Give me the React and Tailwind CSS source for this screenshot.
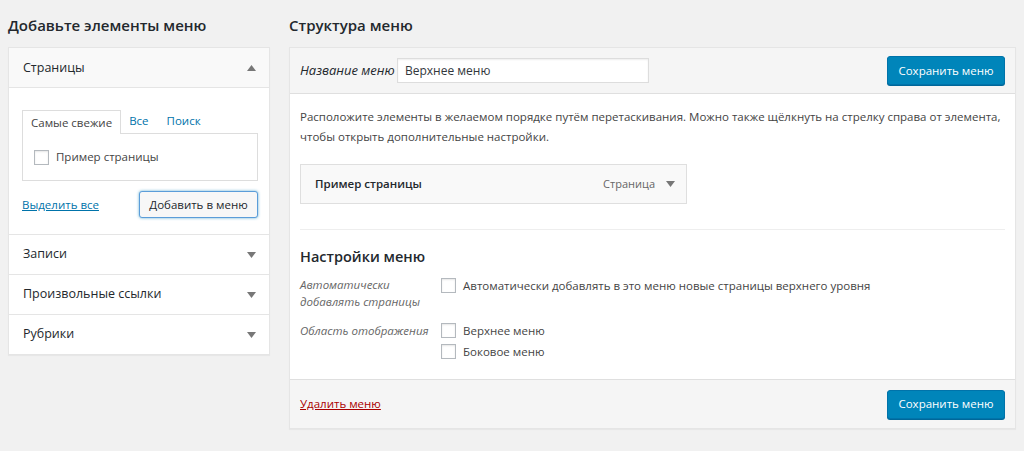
import React from 'react';

const font = { fontFamily: '"Open Sans", "Noto Sans", sans-serif' };

const Caret = ({ up = false }) => (
  <svg width="9" height="6" viewBox="0 0 9 6" className="text-[#777]">
    {up ? <path d="M0 6 L4.5 0 L9 6 Z" fill="currentColor" /> : <path d="M0 0 L9 0 L4.5 6 Z" fill="currentColor" />}
  </svg>
);

const Box = () => (
  <span className="inline-block w-[15px] h-[15px] border border-[#b4b9be] bg-white shadow-[inset_0_1px_2px_rgba(0,0,0,0.1)] shrink-0" />
);

const Accordion = ({ title }) => (
  <div className="h-10 border-t border-[#e5e5e5] flex items-center justify-between pl-[14px] pr-[13px] bg-white">
    <span className="text-[12.5px] font-medium text-[#23282d]">{title}</span>
    <Caret />
  </div>
);

const SaveButton = () => (
  <span className="h-[29px] w-[118px] flex items-center justify-center bg-[#0085ba] border border-[#0073aa] rounded-[3px] text-white text-[11.5px] shadow-[0_1px_0_#006799]">Сохранить меню</span>
);

const App = () => {
  return (
    <div className="w-[1024px] h-[451px] bg-[#f1f1f1] text-[11.5px] text-[#444] overflow-hidden" style={font}>
      <div className="flex px-2">
        {/* Left column */}
        <div className="w-[262px]">
          <h2 className="h-[47px] pt-[3px] flex items-center text-[15px] font-semibold text-[#23282d]">Добавьте элементы меню</h2>
          <div className="border border-[#e5e5e5] shadow-[0_1px_1px_rgba(0,0,0,0.04)] bg-white">
            <div className="h-10 flex items-center justify-between pl-[14px] pr-[13px] bg-[#f9f9f9] border-b border-[#e5e5e5]">
              <span className="text-[12.5px] font-medium text-[#23282d] pt-px">Страницы</span>
              <Caret up />
            </div>
            <div className="pl-[13px] pr-[11px] pt-[21px] pb-[16px]">
              <div className="flex items-end">
                <div className="border border-[#ddd] border-b-0 bg-white px-[8px] h-[24px] flex items-center relative top-px text-[#444]">Самые свежие</div>
                <span className="ml-[8px] h-[24px] flex items-center text-[#0073aa]">Все</span>
                <span className="ml-[18px] h-[24px] flex items-center text-[#0073aa]">Поиск</span>
              </div>
              <div className="border border-[#ddd] h-[48px] flex items-center px-[11px] gap-[7px]">
                <Box />
                <span className="text-[#444]">Пример страницы</span>
              </div>
              <div className="flex items-center justify-between mt-[10px]">
                <span className="text-[#0073aa] underline">Выделить все</span>
                <span className="h-[27px] w-[119px] flex items-center justify-center border border-[#5b9dd9] rounded-[3px] bg-[#f7f7f7] text-[#23282d] shadow-[0_0_3px_rgba(30,140,190,0.7)]">Добавить в меню</span>
              </div>
            </div>
            <Accordion title="Записи" />
            <Accordion title="Произвольные ссылки" />
            <Accordion title="Рубрики" />
          </div>
        </div>

        {/* Right column */}
        <div className="flex-1 ml-[19px]">
          <h2 className="h-[47px] pt-[3px] flex items-center text-[15px] font-semibold text-[#23282d]">Структура меню</h2>
          <div className="border border-[#e5e5e5] shadow-[0_1px_1px_rgba(0,0,0,0.04)] bg-white">
            <div className="h-[46px] flex items-center justify-between pl-[10px] pr-[10px] bg-[#f5f5f5] border-b border-[#dfdfdf]">
              <div className="flex items-center">
                <label className="italic text-[13px] text-[#23282d] w-[97px]">Название меню</label>
                <div className="w-[252px] h-[25px] border border-[#ddd] bg-white px-[7px] flex items-center text-[12px] text-[#32373c] shadow-[inset_0_1px_2px_rgba(0,0,0,0.07)]">Верхнее меню</div>
              </div>
              <SaveButton />
            </div>
            <div className="px-[10px] pt-[13px] pb-[20px]">
              <p className="leading-[20px] text-[#444]">Расположите элементы в желаемом порядке путём перетаскивания. Можно также щёлкнуть на стрелку справа от элемента, чтобы открыть дополнительные настройки.</p>
              <div className="mt-[17px] w-[387px] h-[40px] border border-[#dfdfdf] bg-[#f9f9f9] flex items-center justify-between pl-[14px] pr-[11px]">
                <span className="font-semibold text-[#23282d]">Пример страницы</span>
                <span className="flex items-center gap-[11px] text-[11px] text-[#666]">Страница <Caret /></span>
              </div>
              <div className="mt-[25px] border-t border-[#eee]" />
              <h3 className="mt-[16px] text-[14.5px] leading-[22px] font-semibold text-[#23282d]">Настройки меню</h3>
              <div className="mt-[8px] flex">
                <div className="w-[141px] italic text-[#666] text-[11.5px] leading-[17px]">Автоматически<br />добавлять страницы</div>
                <div className="flex items-start gap-[7px] pt-[2px]"><Box /><span className="leading-[15px]">Автоматически добавлять в это меню новые страницы верхнего уровня</span></div>
              </div>
              <div className="mt-[11px] flex">
                <div className="w-[141px] italic text-[#666] text-[11.5px] leading-[17px] pt-px">Область отображения</div>
                <div className="flex flex-col gap-[6px] pt-[2px]">
                  <div className="flex items-center gap-[7px]"><Box /><span className="leading-[15px]">Верхнее меню</span></div>
                  <div className="flex items-center gap-[7px]"><Box /><span className="leading-[15px]">Боковое меню</span></div>
                </div>
              </div>
            </div>
            <div className="h-[49px] flex items-center justify-between px-[10px] bg-[#f5f5f5] border-t border-[#dfdfdf]">
              <span className="text-[#a00] underline">Удалить меню</span>
              <SaveButton />
            </div>
          </div>
        </div>
      </div>
    </div>
  );
};

export default App;
